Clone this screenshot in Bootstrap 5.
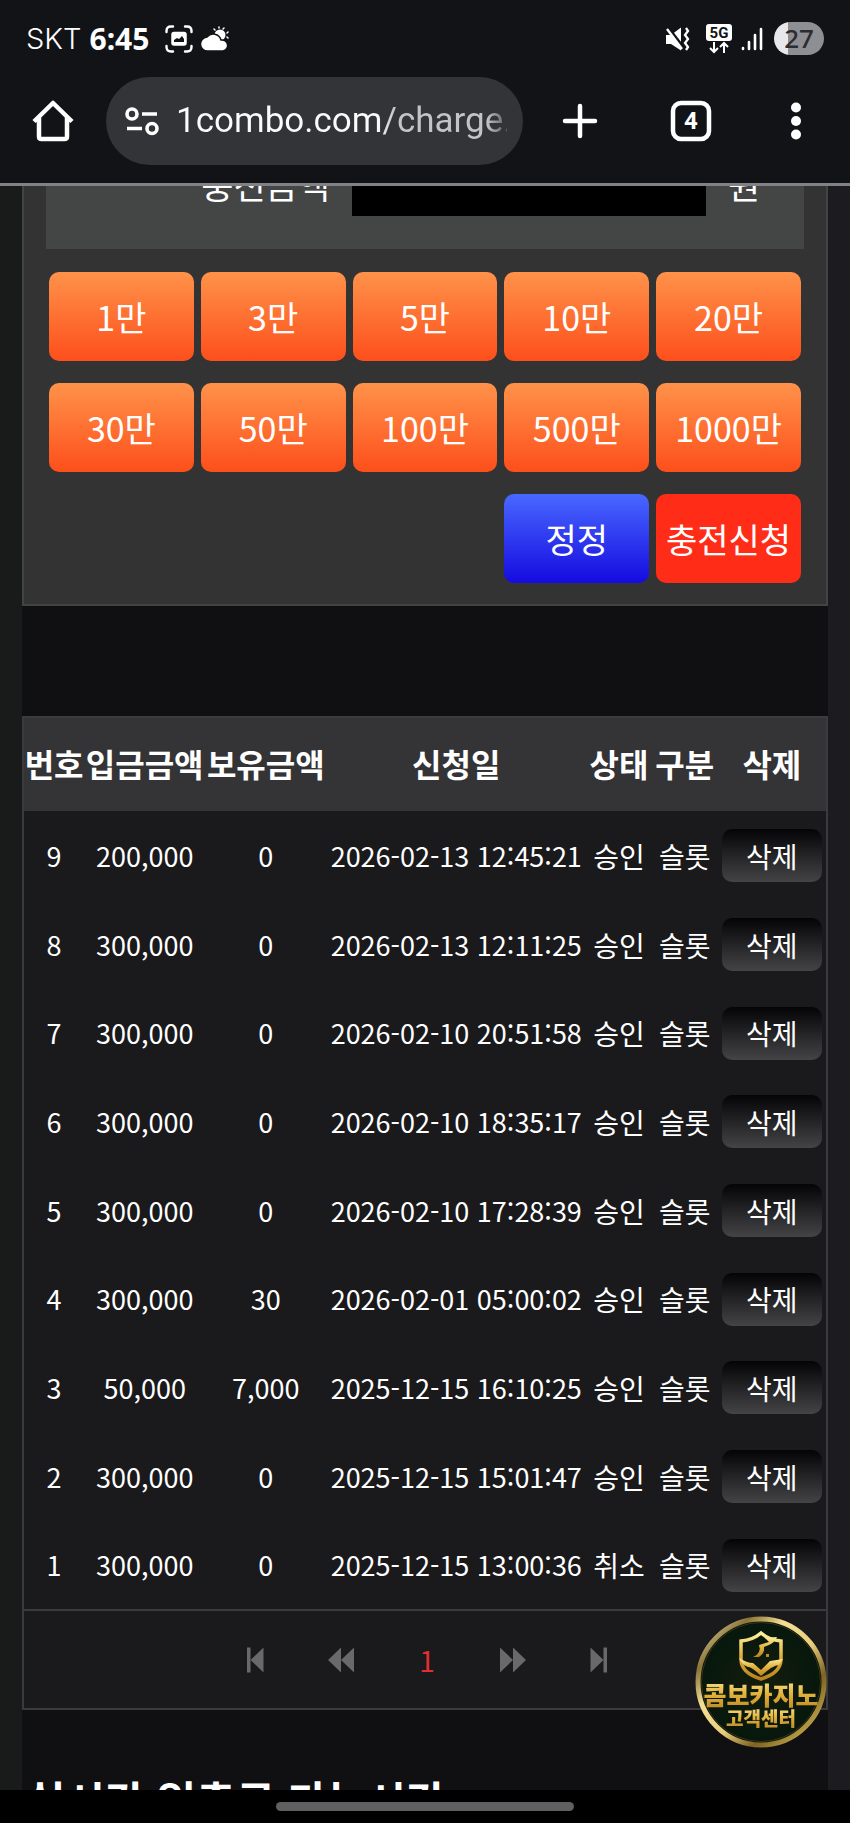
<!DOCTYPE html>
<html lang="ko" data-bs-theme="dark">
<head>
<meta charset="utf-8">
<meta name="viewport" content="width=device-width, initial-scale=1">
<title>충전신청</title>
<link href="https://cdn.jsdelivr.net/npm/bootstrap@5.3.0/dist/css/bootstrap.min.css" rel="stylesheet">
<style>
  body { background: #100f11; color: #fff; font-family: "Noto Sans CJK KR", sans-serif; }
  .phone-top { background: #121317; border-bottom: 3px solid #828186; font-family: Inter, sans-serif; z-index: 2; }
  .status-row { height: 77px; padding: 0 26px; }
  .carrier { font-size: 29px; font-weight: 300; }
  .clock { font-size: 30px; font-family: "Noto Sans", sans-serif; font-weight: 700; }
  .battery { width: 50px; height: 33px; border-radius: 17px; color: #2b2c30; font: 500 26px/33px "Noto Sans", sans-serif; background: linear-gradient(90deg, #e8e8ea 27%, #8e8f93 27%); }
  .tool-row { padding-bottom: 18px; }
  .tool-btn { flex-shrink: 0; height: 88px; padding: 0; background: none; border: 0; color: #fff; }
  .tool-home { width: 106px; }
  .tool-plus { width: 113px; }
  .tool-tabs { width: 110px; }
  .tool-menu { width: 104px; padding-right: 4px; }
  .address { min-width: 0; height: 88px; border-radius: 44px; background: #333438; padding: 0 16px 0 18px; }
  .address input { border: 0; outline: 0; color: #fff; font-family: Roboto, sans-serif; font-size: 35px; padding: 0; min-width: 0; background: linear-gradient(90deg, #fbfbfc 61%, #c4c3ca 66%, #c4c3ca 94%, #55565b); -webkit-background-clip: text; background-clip: text; -webkit-text-fill-color: transparent; }

  .page-area { background: linear-gradient(90deg, #191b1a 0, #1b1b1d 50%, #1c1b1f 100%); }
  .page-body { background: #100f11; margin: 0 22px; }
  .charge-panel { margin-top: -87px; border: 2px solid #424344; background: #333333; padding: 22px 22px 21px; }
  .field-row { display: grid; grid-template-columns: 306fr 354fr 98fr; height: 126px; background: #444545; font-size: 35px; }
  .field-label { padding: 0 22px 4px 0; }
  .field-row input { min-width: 0; height: 60px; background: #000; border: 0; border-radius: 0; color: #fff; }
  .field-unit { padding: 0 0 4px 22px; }
  .amount-grid { display: grid; grid-template-columns: repeat(5, 1fr); gap: 22px 7px; padding: 23px 3px 0; }
  .amount-grid button { height: 89px; border: 0; border-radius: 10px; padding: 0; font-size: 34px; color: #fff; white-space: nowrap; }
  .btn-amount { background: linear-gradient(#ff924a, #fd4f1b); }
  .amount-grid .btn-reset { background: linear-gradient(#4868ff, #150be0); grid-column: 4; }
  .btn-apply { background: #ff2d18; }

  .history { margin-top: 110px; border: 2px solid #3b3b3d; background: #1a191b; }
  .history table { table-layout: fixed; font-size: 28px; line-height: 40px; text-align: center; white-space: nowrap; width: 100%; }
  .history th { height: 93px; padding: 0 0 4px; background: #343335; font-size: 32px; font-weight: 700; }
  .history td { height: 89px; padding: 0; }
  .history tr:nth-child(3n) td { height: 88px; }
  .history td:nth-child(-n+4) { font-size: 27px; }
  .c-no { width: 7.5%; } .c-sum { width: 15.1%; } .c-date { width: 32.4%; } .c-tag { width: 8.2%; }
  .btn-del { width: 100px; height: 53px; border: 0; border-radius: 10px; padding: 0; color: #fff; font-size: 28px; line-height: 48px; background: linear-gradient(#040306, #444346); }
  .pager { height: 99px; border-top: 2px solid #3b3b3d; color: #69686b; padding-left: 4px; }
  .pager a { width: 86px; color: inherit; text-decoration: none; font-size: 28px; }
  .pager svg { display: block; margin: 0 auto; }
  .pager a.current { color: #e32f31; }
  .hours-title { margin: 58px 0 0; padding-left: 4px; font-size: 43px; line-height: 62px; font-weight: 700; white-space: nowrap; }

  .gesture { height: 33px; background: #000; z-index: 2; }
  .gesture span { width: 35%; height: 9px; border-radius: 5px; background: #605f61; }
  .help-link { position: fixed; right: 23px; bottom: 75px; width: 132px; height: 132px; z-index: 3; }
</style>
</head>
<body class="vh-100 overflow-hidden d-flex flex-column">
<header class="phone-top position-relative flex-shrink-0">
  <div class="status-row d-flex align-items-center">
    <span class="carrier me-2">SKT</span>
    <span class="clock me-3">6:45</span>
    <svg class="me-2" width="28" height="28" viewBox="0 0 28 28" fill="none" stroke="#fff" stroke-width="2.4" stroke-linecap="round"><path d="M1.5 7V6Q1.500 1.500 6 1.500H8M20 1.500H22Q26.500 1.500 26.500 6V7M26.500 21V22Q26.500 26.500 22 26.500H20M8 26.500H6Q1.500 26.500 1.500 22V21"/><rect x="7" y="7.500" width="14" height="12.500" rx="2" fill="#fff" stroke="#fff" stroke-width="1.500"/><path d="M9 17v-2l3-2 2 1 3-3 2 3v3z" fill="#121317" stroke="none"/></svg>
    <svg width="28" height="26" viewBox="0 0 28 26"><g stroke="#fff" stroke-width="1.500" stroke-linecap="round"><path d="M18 1v1M13 3l1 1M23 2l-1 1M27 6l-1 1M27 12l-1-1"/></g><circle cx="19" cy="9" r="5.500" fill="#fff"/><path d="M7 25a7 7 0 0 1-1-14 8 8 0 0 1 14 3 5.500 5.500 0 0 1 2 11z" fill="#fff" stroke="#121317" stroke-width="1.500"/></svg>
    <span class="flex-grow-1"></span>
    <svg class="me-3" width="24" height="24" viewBox="0 0 24 24"><path d="M0 8h5l10-7.500v23L5 17H0z" fill="#fff"/><path d="M1 0l17 22" stroke="#121317" stroke-width="4"/><path d="M1 2l15 20" stroke="#fff" stroke-width="2.300"/><path d="M20 1l2 3-3 4 3 4-3 4 3 4-2 3" fill="none" stroke="#fff" stroke-width="2.300"/></svg>
    <svg class="me-2" width="26" height="30" viewBox="0 0 26 30"><rect width="26" height="17" rx="3" fill="#fff"/><text x="13" y="14" text-anchor="middle" font-family="Roboto, sans-serif" font-weight="700" font-size="15" fill="#121317">5G</text><path d="M8 18v10M4 24l4 4 4-4M18 29V19M14 23l4-4 4 4" fill="none" stroke="#fff" stroke-width="2"/></svg>
    <svg class="me-2" width="26" height="24" viewBox="0 0 26 24" stroke="#fff" stroke-width="2.600" stroke-linecap="round"><path d="M3 21v1M9 15v7M15 8v14M21 2v20"/></svg>
    <span class="battery text-center">27</span>
  </div>
  <div class="tool-row d-flex">
    <button class="tool-btn tool-home" aria-label="홈"><svg width="42" height="42" viewBox="0 0 42 42" fill="none" stroke="#fff" stroke-width="4.500" stroke-linejoin="round"><path d="M2 21.500L21 3l19 18.500M7 17v19.500q0 2.500 2.500 2.500h23q2.500 0 2.500-2.500V17"/></svg></button>
    <div class="address d-flex align-items-center flex-grow-1">
      <svg class="flex-shrink-0 me-3" width="36" height="30" viewBox="0 0 36 30" fill="none" stroke="#fff" stroke-width="3.600"><circle cx="8" cy="8" r="5"/><circle cx="28" cy="22.500" r="5"/><path d="M18 8h15M3 22.500h15"/></svg>
      <input class="flex-grow-1" type="text" aria-label="주소" value="1combo.com/charge.">
    </div>
    <button class="tool-btn tool-plus" aria-label="새 탭"><svg width="36" height="36" viewBox="0 0 36 36" stroke="#fff" stroke-width="4.500" stroke-linecap="round"><path d="M3 18h30M18 3v30"/></svg></button>
    <button class="tool-btn tool-tabs" aria-label="탭 4개"><svg width="42" height="42" viewBox="0 0 42 42"><rect x="3" y="3" width="36" height="36" rx="8" fill="none" stroke="#fff" stroke-width="4.500"/><text x="21" y="29" text-anchor="middle" font-family="Roboto, sans-serif" font-weight="700" font-size="24" fill="#fff">4</text></svg></button>
    <button class="tool-btn tool-menu" aria-label="메뉴"><svg width="12" height="38" viewBox="0 0 12 38" fill="#fff"><circle cx="6" cy="5.500" r="5"/><circle cx="6" cy="19" r="5"/><circle cx="6" cy="32.500" r="5"/></svg></button>
  </div>
</header>

<main class="page-area flex-grow-1 overflow-hidden d-flex flex-column">
  <div class="page-body flex-grow-1">
    <form class="charge-panel">
      <div class="field-row align-items-center">
        <label class="field-label text-end" for="amount">충전금액</label>
        <input id="amount" type="text">
        <span class="field-unit">원</span>
      </div>
      <div class="amount-grid">
        <button type="button" class="btn-amount">1만</button>
        <button type="button" class="btn-amount">3만</button>
        <button type="button" class="btn-amount">5만</button>
        <button type="button" class="btn-amount">10만</button>
        <button type="button" class="btn-amount">20만</button>
        <button type="button" class="btn-amount">30만</button>
        <button type="button" class="btn-amount">50만</button>
        <button type="button" class="btn-amount">100만</button>
        <button type="button" class="btn-amount">500만</button>
        <button type="button" class="btn-amount">1000만</button>
        <button type="reset" class="btn-reset">정정</button>
        <button type="button" class="btn-apply">충전신청</button>
      </div>
    </form>

    <section class="history">
      <table>
        <colgroup><col class="c-no"><col class="c-sum"><col class="c-sum"><col class="c-date"><col class="c-tag"><col class="c-tag"><col></colgroup>
        <thead><tr><th>번호</th><th>입금금액</th><th>보유금액</th><th>신청일</th><th>상태</th><th>구분</th><th>삭제</th></tr></thead>
        <tbody>
          <tr><td>9</td><td>200,000</td><td>0</td><td>2026-02-13 12:45:21</td><td>승인</td><td>슬롯</td><td><button class="btn-del">삭제</button></td></tr>
          <tr><td>8</td><td>300,000</td><td>0</td><td>2026-02-13 12:11:25</td><td>승인</td><td>슬롯</td><td><button class="btn-del">삭제</button></td></tr>
          <tr><td>7</td><td>300,000</td><td>0</td><td>2026-02-10 20:51:58</td><td>승인</td><td>슬롯</td><td><button class="btn-del">삭제</button></td></tr>
          <tr><td>6</td><td>300,000</td><td>0</td><td>2026-02-10 18:35:17</td><td>승인</td><td>슬롯</td><td><button class="btn-del">삭제</button></td></tr>
          <tr><td>5</td><td>300,000</td><td>0</td><td>2026-02-10 17:28:39</td><td>승인</td><td>슬롯</td><td><button class="btn-del">삭제</button></td></tr>
          <tr><td>4</td><td>300,000</td><td>30</td><td>2026-02-01 05:00:02</td><td>승인</td><td>슬롯</td><td><button class="btn-del">삭제</button></td></tr>
          <tr><td>3</td><td>50,000</td><td>7,000</td><td>2025-12-15 16:10:25</td><td>승인</td><td>슬롯</td><td><button class="btn-del">삭제</button></td></tr>
          <tr><td>2</td><td>300,000</td><td>0</td><td>2025-12-15 15:01:47</td><td>승인</td><td>슬롯</td><td><button class="btn-del">삭제</button></td></tr>
          <tr><td>1</td><td>300,000</td><td>0</td><td>2025-12-15 13:00:36</td><td>취소</td><td>슬롯</td><td><button class="btn-del">삭제</button></td></tr>
        </tbody>
      </table>
      <nav class="pager d-flex justify-content-center align-items-center text-center" aria-label="페이지">
        <a href="#" aria-label="처음"><svg width="18" height="26" viewBox="0 0 18 26" fill="currentColor"><path d="M1 .500h3.500v25H1zM17.500 .500v25L4.500 13z"/></svg></a>
        <a href="#" aria-label="이전"><svg width="26" height="26" viewBox="0 0 26 26" fill="currentColor"><path d="M13 .500v25L0 13zM26 .500v25L13 13z"/></svg></a>
        <a href="#" class="current">1</a>
        <a href="#" aria-label="다음"><svg width="26" height="26" viewBox="0 0 26 26" fill="currentColor"><path d="M0 .500v25L13 13zM13 .500v25L26 13z"/></svg></a>
        <a href="#" aria-label="마지막"><svg width="18" height="26" viewBox="0 0 18 26" fill="currentColor"><path d="M13.500 .500H17v25h-3.500zM.500 .500v25l13-12.500z"/></svg></a>
      </nav>
    </section>
    <h2 class="hours-title">실시간 입출금 가능시간</h2>
  </div>
</main>

<a class="help-link" href="#" aria-label="콤보카지노 고객센터">
  <svg width="132" height="132" viewBox="0 0 132 132">
    <defs>
      <linearGradient id="gold" x1="0" y1="0" x2="0" y2="1"><stop offset="0" stop-color="#fff0a0"/><stop offset=".5" stop-color="#e2b23c"/><stop offset="1" stop-color="#b98220"/></linearGradient>
      <linearGradient id="ring" x1="0" y1="0" x2="1" y2="1"><stop offset="0" stop-color="#f6ecb8"/><stop offset=".2" stop-color="#8a7438"/><stop offset=".35" stop-color="#f3df94"/><stop offset=".55" stop-color="#e8cf7c"/><stop offset=".72" stop-color="#7d6222"/><stop offset="1" stop-color="#e9ce62"/></linearGradient>
      <radialGradient id="disc"><stop offset="0" stop-color="#141d0d"/><stop offset="1" stop-color="#06170d"/></radialGradient>
    </defs>
    <circle cx="66" cy="66" r="63" fill="url(#disc)" stroke="url(#ring)" stroke-width="5"/>
    <circle cx="66" cy="66" r="59.500" fill="none" stroke="#3c3212"/>
    <g fill="none" stroke="url(#gold)" stroke-width="3.500">
      <path d="M66 17q8 7 20 8v18q0 14-20 20-20-6-20-20V25q12-1 20-8z"/>
    </g>
    <path d="M44 42q8 5 14 5l8 7 9-9 13-2-4 6q-6 0-18 11-9-9-13-9-6-2-9-9z" fill="url(#gold)"/>
    <path d="M58 41q9-4 6-12l10-3-4-4 12-1q-2 5-8 8l-5 2q1 6-5 10zM71 38h3v3h-3z" fill="url(#gold)"/>
    <g font-family="Noto Sans CJK KR, sans-serif" font-weight="900" text-anchor="middle" fill="url(#gold)">
      <text x="66" y="89" font-size="25">콤보카지노</text>
      <text x="66" y="110" font-size="19">고객센터</text>
    </g>
  </svg>
</a>

<footer class="gesture position-relative flex-shrink-0 d-flex justify-content-center align-items-center"><span></span></footer>
<script src="https://cdn.jsdelivr.net/npm/bootstrap@5.3.0/dist/js/bootstrap.bundle.min.js"></script>
</body>
</html>
